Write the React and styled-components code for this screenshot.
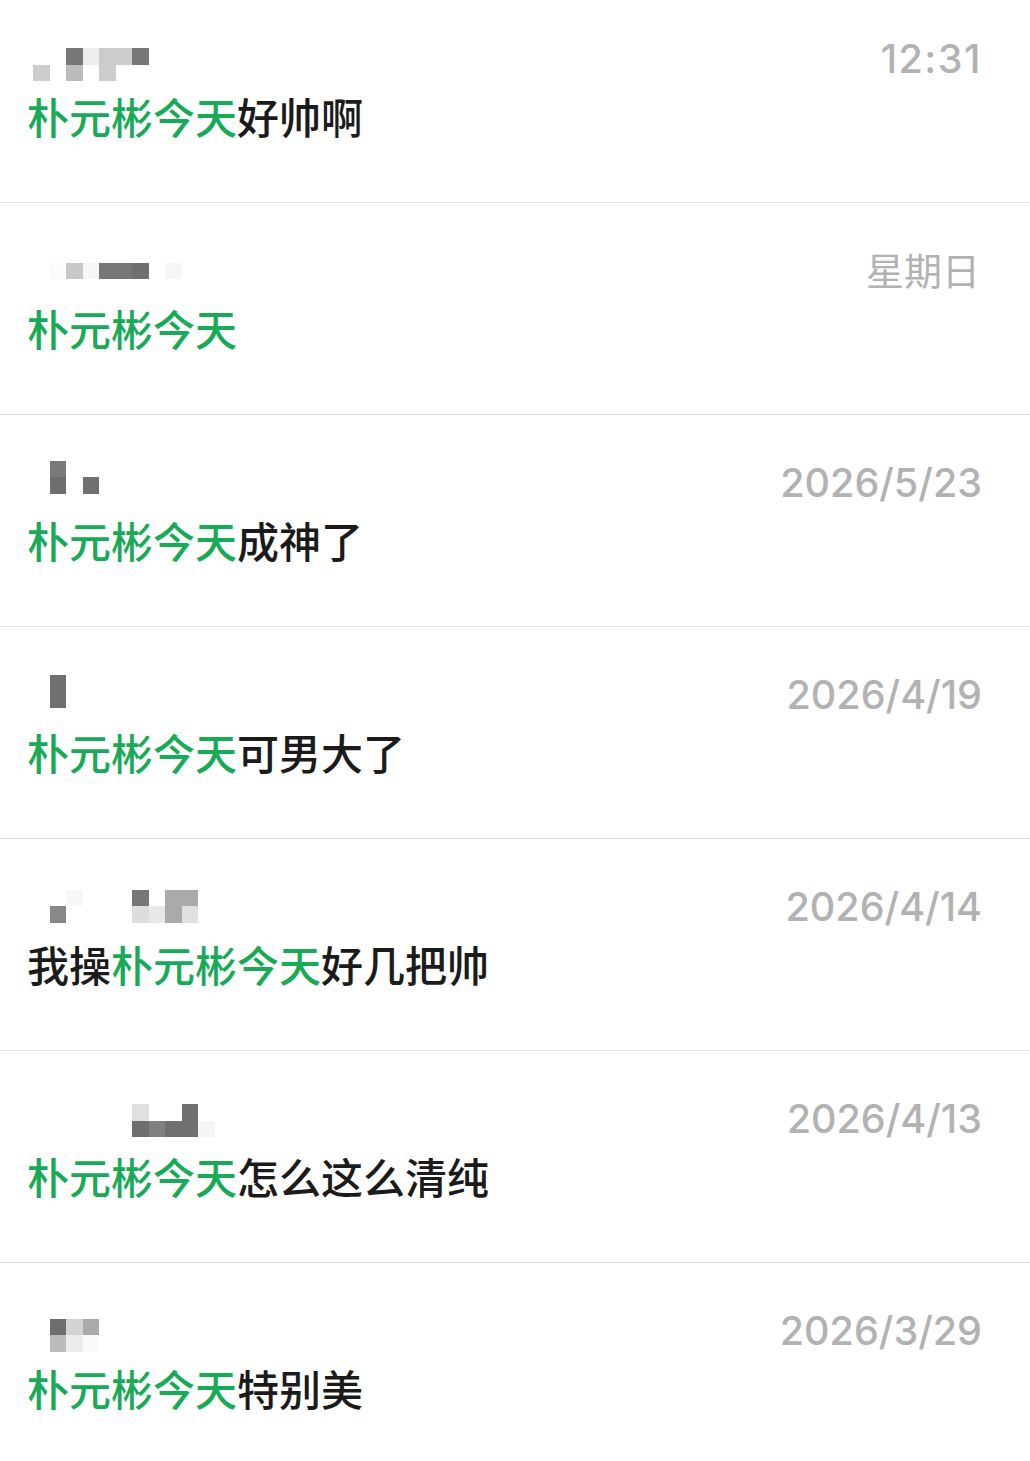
import React from 'react';
import styled, { createGlobalStyle } from 'styled-components';

const GlobalStyle = createGlobalStyle`
  html, body {
    margin: 0;
    padding: 0;
    background: #ffffff;
  }
  body {
    font-family: "Noto Sans CJK SC", "Liberation Sans", sans-serif;
  }
`;

const List = styled.div`
  margin-top: -9px;
  width: 1030px;
`;

const Row = styled.div`
  height: 212px;
  box-sizing: border-box;
  border-bottom: 1px solid #e3e3e3;
  display: flex;
  flex-direction: column;
`;

const Header = styled.div`
  height: 103.5px;
  display: flex;
  justify-content: space-between;
  align-items: flex-start;
  padding-right: 48px;
  flex-shrink: 0;
`;

const Mosaic = styled.div`
  margin-top: ${(p) => p.$offset}px;
  display: grid;
  grid-template-columns: repeat(14, 16.5px);
  grid-auto-rows: 16.5px;
`;

const Cell = styled.div`
  grid-row: ${(p) => p.$r + 1};
  grid-column: ${(p) => p.$c + 1};
  background: ${(p) => p.$tone};
`;

const Time = styled.div`
  margin-top: ${(p) => (p.$cjk ? '47px' : '48.5px')};
  margin-right: ${(p) => (p.$cjk ? '2px' : '0')};
  font-family: ${(p) => (p.$cjk ? '"Noto Sans CJK SC"' : 'Inter, "Noto Sans CJK SC"')}, sans-serif;
  font-weight: ${(p) => (p.$cjk ? 400 : 500)};
  font-size: ${(p) => (p.$cjk ? '38px' : '39.5px')};
  letter-spacing: ${(p) => (p.$short ? '1.5px' : '0')};
  line-height: 1;
  color: #b2b2b2;
  white-space: nowrap;
`;

const Message = styled.div`
  padding-left: 27px;
  font-family: "Noto Sans CJK SC", sans-serif;
  font-weight: 500;
  font-size: 42px;
  line-height: 1;
  color: #1b1b1b;
  white-space: nowrap;
`;

const Hit = styled.span`
  color: #19aa58;
`;

const rows = [
  {
    id: 0,
    time: '12:31',
    short: true,
    offset: 57,
    cells: [
      [0, 4, '#777'], [0, 5, '#eee'], [0, 6, '#ccc'], [0, 7, '#ccc'], [0, 8, '#777'],
      [1, 2, '#ccc'], [1, 4, '#bbb'], [1, 6, '#ccc'],
    ],
    parts: [['hit', '朴元彬今天'], ['txt', '好帅啊']],
  },
  {
    id: 1,
    time: '星期日',
    cjk: true,
    offset: 59.5,
    cells: [
      [0, 3, '#fbfbfb'], [0, 4, '#c8c8c8'], [0, 5, '#f7f7f7'], [0, 6, '#777'], [0, 7, '#777'],
      [0, 8, '#6f6f6f'], [0, 10, '#f6f6f6'],
    ],
    parts: [['hit', '朴元彬今天']],
  },
  {
    id: 2,
    time: '2026/5/23',
    offset: 45.5,
    cells: [[0, 3, '#7a7a7a'], [1, 3, '#6e6e6e'], [1, 5, '#707070']],
    parts: [['hit', '朴元彬今天'], ['txt', '成神了']],
  },
  {
    id: 3,
    time: '2026/4/19',
    offset: 48,
    cells: [[0, 3, '#707070'], [1, 3, '#707070']],
    parts: [['hit', '朴元彬今天'], ['txt', '可男大了']],
  },
  {
    id: 4,
    time: '2026/4/14',
    offset: 50.5,
    cells: [
      [0, 4, '#f8f8f8'], [1, 3, '#888'],
      [0, 8, '#777'], [1, 8, '#ddd'], [1, 9, '#e8e8e8'],
      [0, 10, '#aaa'], [1, 10, '#aaa'], [0, 11, '#aaa'], [1, 11, '#e0e0e0'],
    ],
    parts: [['txt', '我操'], ['hit', '朴元彬今天'], ['txt', '好几把帅']],
  },
  {
    id: 5,
    time: '2026/4/13',
    offset: 53,
    cells: [
      [0, 8, '#e0e0e0'], [1, 8, '#6e6e6e'], [1, 9, '#808080'], [1, 10, '#707070'],
      [0, 11, '#707070'], [1, 11, '#707070'], [1, 12, '#f5f5f5'],
    ],
    parts: [['hit', '朴元彬今天'], ['txt', '怎么这么清纯']],
  },
  {
    id: 6,
    time: '2026/3/29',
    offset: 55.5,
    cells: [
      [0, 3, '#6e6e6e'], [1, 3, '#bbb'], [0, 4, '#d3d3d3'], [1, 4, '#ececec'],
      [0, 5, '#aaa'], [1, 5, '#fafafa'],
    ],
    parts: [['hit', '朴元彬今天'], ['txt', '特别美']],
  },
];

function App() {
  return (
    <>
      <GlobalStyle />
      <List>
        {rows.map((row) => (
          <Row key={row.id}>
            <Header>
              <Mosaic $offset={row.offset}>
                {row.cells.map(([r, c, tone]) => (
                  <Cell key={`${r}-${c}`} $r={r} $c={c} $tone={tone} />
                ))}
              </Mosaic>
              <Time $cjk={row.cjk} $short={row.short}>{row.time}</Time>
            </Header>
            <Message>
              {row.parts.map(([kind, text], i) =>
                kind === 'hit' ? <Hit key={i}>{text}</Hit> : <span key={i}>{text}</span>
              )}
            </Message>
          </Row>
        ))}
      </List>
    </>
  );
}

export default App;
